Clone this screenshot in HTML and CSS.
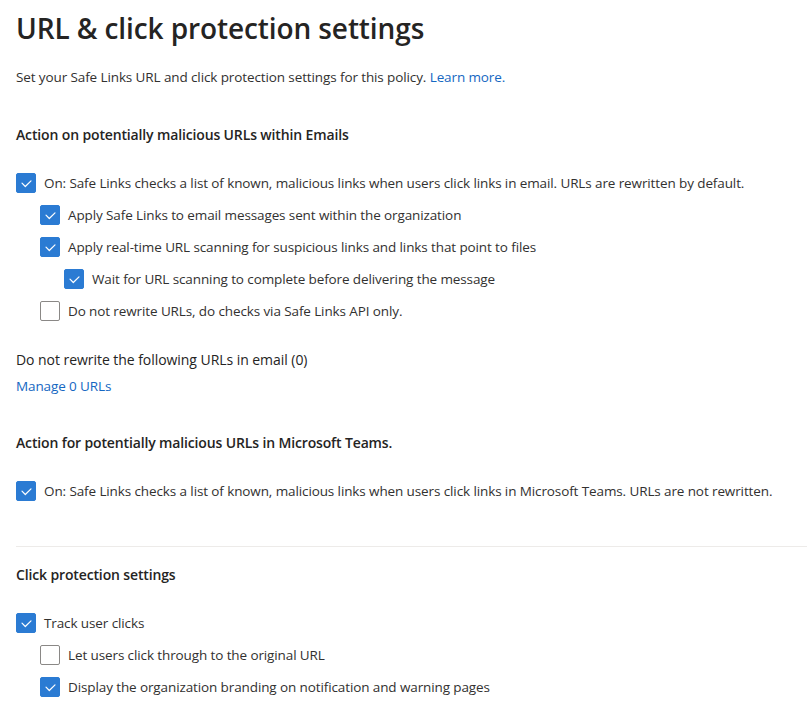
FILE: index.html
```html
<!DOCTYPE html>
<html lang="en">
<head>
<meta charset="utf-8">
<title>URL &amp; click protection settings</title>
<link rel="stylesheet" href="styles.css">
</head>
<body>
<main class="page">
  <h1 class="title">URL &amp; click protection settings</h1>
  <p class="desc">Set your Safe Links URL and click protection settings for this policy. <a class="link" href="#">Learn more.</a></p>

  <h2 class="section-head">Action on potentially malicious URLs within Emails</h2>
  <ul class="checks">
    <li class="check lvl0"><span class="box on"><svg viewBox="0 0 20 20"><path d="M6 10.2 L9.3 13.5 L15 7.8"/></svg></span><span class="label">On: Safe Links checks a list of known, malicious links when users click links in email. URLs are rewritten by default.</span></li>
    <li class="check lvl1"><span class="box on"><svg viewBox="0 0 20 20"><path d="M6 10.2 L9.3 13.5 L15 7.8"/></svg></span><span class="label">Apply Safe Links to email messages sent within the organization</span></li>
    <li class="check lvl1"><span class="box on"><svg viewBox="0 0 20 20"><path d="M6 10.2 L9.3 13.5 L15 7.8"/></svg></span><span class="label">Apply real-time URL scanning for suspicious links and links that point to files</span></li>
    <li class="check lvl2"><span class="box on"><svg viewBox="0 0 20 20"><path d="M6 10.2 L9.3 13.5 L15 7.8"/></svg></span><span class="label">Wait for URL scanning to complete before delivering the message</span></li>
    <li class="check lvl1"><span class="box"></span><span class="label">Do not rewrite URLs, do checks via Safe Links API only.</span></li>
  </ul>

  <p class="sub-head">Do not rewrite the following URLs in email (0)</p>
  <a class="link manage" href="#">Manage 0 URLs</a>

  <h2 class="section-head teams">Action for potentially malicious URLs in Microsoft Teams.</h2>
  <ul class="checks">
    <li class="check lvl0"><span class="box on"><svg viewBox="0 0 20 20"><path d="M6 10.2 L9.3 13.5 L15 7.8"/></svg></span><span class="label">On: Safe Links checks a list of known, malicious links when users click links in Microsoft Teams. URLs are not rewritten.</span></li>
  </ul>

  <hr class="divider">

  <h2 class="section-head click">Click protection settings</h2>
  <ul class="checks">
    <li class="check lvl0"><span class="box on"><svg viewBox="0 0 20 20"><path d="M6 10.2 L9.3 13.5 L15 7.8"/></svg></span><span class="label">Track user clicks</span></li>
    <li class="check lvl1"><span class="box"></span><span class="label">Let users click through to the original URL</span></li>
    <li class="check lvl1"><span class="box on"><svg viewBox="0 0 20 20"><path d="M6 10.2 L9.3 13.5 L15 7.8"/></svg></span><span class="label">Display the organization branding on notification and warning pages</span></li>
  </ul>
</main>
</body>
</html>
```
FILE: styles.css
```css
* { box-sizing: border-box; }
html, body { margin: 0; padding: 0; background: #ffffff; }
body {
  font-family: "Open Sans", "Noto Sans", "Liberation Sans", sans-serif;
  color: #323130;
  font-size: 13.5px;
  letter-spacing: -0.11px;
  overflow: hidden;
}
.page {
  padding: 8px 0 0 16px;
}
.title {
  margin: 0;
  font-size: 28px;
  line-height: 40px;
  font-weight: 600;
  letter-spacing: -0.1px;
  color: #252423;
}
.desc {
  margin: 19px 0 0;
  line-height: 20px;
}
.link {
  color: #1567c2;
  text-decoration: none;
}
.section-head {
  margin: 38px 0 0;
  font-size: 14px;
  line-height: 20px;
  font-weight: 600;
  letter-spacing: -0.14px;
  color: #252423;
}
.section-head.teams { margin-top: 37px; }
.section-head.click { margin-top: 18px; }
.checks {
  list-style: none;
  margin: 22px 0 0;
  padding: 0;
}
.check {
  display: flex;
  align-items: center;
  height: 32px;
  gap: 8px;
  white-space: nowrap;
}
.lvl1 { padding-left: 24px; }
.lvl2 { padding-left: 48px; }
.box {
  flex: none;
  width: 20px;
  height: 20px;
  border: 1px solid #8a8886;
  border-radius: 2px;
  display: flex;
  align-items: center;
  justify-content: center;
  background: #ffffff;
}
.box.on {
  background: #2b7bd3;
  border-color: #2b7bd3;
}
.box svg {
  width: 20px;
  height: 20px;
  flex: none;
}
.box svg path {
  fill: none;
  stroke: #ffffff;
  stroke-width: 1.2;
  stroke-linecap: round;
  stroke-linejoin: round;
}
.label { line-height: 20px; }
.sub-head {
  margin: 23px 0 0;
  line-height: 20px;
  font-size: 14px;
  font-weight: 500;
  letter-spacing: -0.05px;
  color: #252423;
}
.manage {
  display: block;
  width: max-content;
  margin-top: 6px;
  line-height: 20px;
}
.divider {
  margin: 39px 0 0;
  border: 0;
  height: 1px;
  background: #edebe9;
}
```
